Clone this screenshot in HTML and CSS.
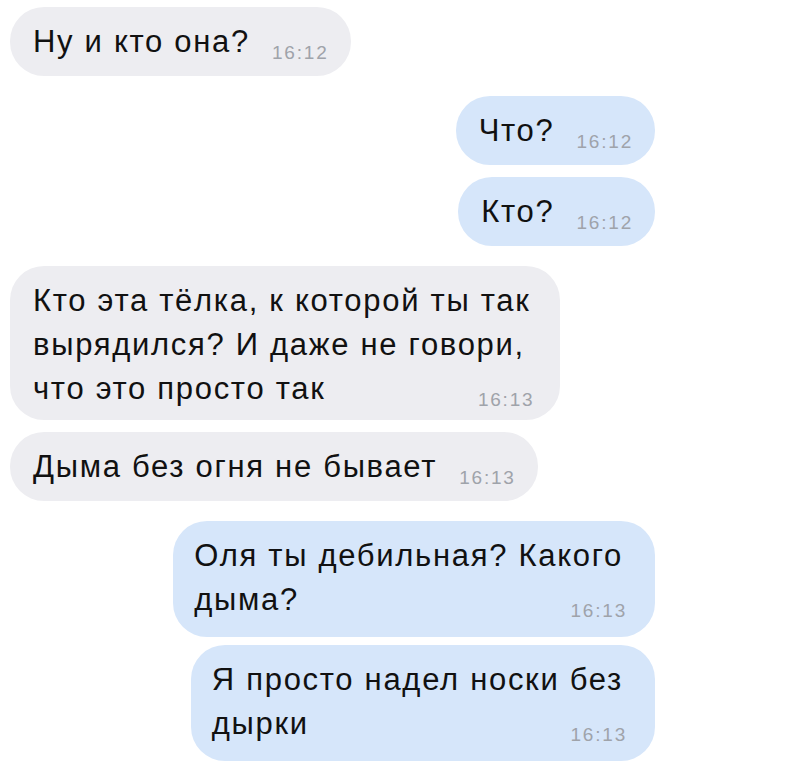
FILE: index.html
```html
<!DOCTYPE html>
<html lang="ru">
<head>
    <meta charset="UTF-8">
    <meta name="viewport" content="width=device-width, initial-scale=1.0">
    <title>Переписка</title>
    <link rel="stylesheet" href="styles.css">
</head>
<body>
    <div class="chat">
        <!-- Она -->
        <div class="msg in">
            <div class="bubble">
                <span class="text">Ну и кто она?</span>
                <span class="time">16:12</span>
            </div>
        </div>

        <!-- Я -->
        <div class="msg out next-side">
            <div class="bubble">
                <span class="text">Что?</span>
                <span class="time">16:12</span>
            </div>
        </div>
        <div class="msg out">
            <div class="bubble">
                <span class="text">Кто?</span>
                <span class="time">16:12</span>
            </div>
        </div>

        <!-- Она -->
        <div class="msg in next-side">
            <div class="bubble multi">
                <span class="text">Кто эта тёлка, к которой ты так<br>вырядился? И даже не говори,<br>что это просто так</span>
                <span class="time">16:13</span>
            </div>
        </div>
        <div class="msg in">
            <div class="bubble">
                <span class="text">Дыма без огня не бывает</span>
                <span class="time">16:13</span>
            </div>
        </div>

        <!-- Я -->
        <div class="msg out next-side">
            <div class="bubble multi">
                <span class="text">Оля ты дебильная? Какого<br>дыма?</span>
                <span class="time">16:13</span>
            </div>
        </div>
        <div class="msg out tight">
            <div class="bubble multi">
                <span class="text">Я просто надел носки без<br>дырки</span>
                <span class="time">16:13</span>
            </div>
        </div>
    </div>
</body>
</html>
```

FILE: styles.css
```css
body {
    margin: 0;
    background-color: #fff;
    font-family: "Liberation Sans", Arial, sans-serif;
    color: #111;
}

.chat {
    display: flex;
    flex-direction: column;
    gap: 12px;
    padding: 7px 136px 0 10px;
}

.msg {
    display: flex;
}

.msg.out {
    justify-content: flex-end;
}

.msg.next-side {
    margin-top: 8px;
}

.msg.tight {
    margin-top: -4px;
}

.bubble {
    display: flex;
    align-items: baseline;
    gap: 22px;
    padding: 13px 22px 12px 23px;
    border-radius: 34px;
    background-color: #ededf1;
}

.out .bubble {
    background-color: #d6e6fa;
}

.text {
    font-size: 31px;
    line-height: 44px;
    letter-spacing: 1.7px;
    white-space: nowrap;
}

.time {
    position: relative;
    top: 7px;
    font-size: 19px;
    letter-spacing: 1.8px;
    color: #9fa3aa;
}

.bubble.multi {
    display: grid;
    padding-right: 30px;
    padding-bottom: 9px;
}

.out .bubble.multi {
    padding-left: 21px;
    padding-right: 32px;
    padding-bottom: 15px;
}

.multi .text,
.multi .time {
    grid-area: 1 / 1;
}

.multi .time {
    justify-self: end;
    align-self: end;
    margin-right: -4px;
    line-height: 32px;
    top: 5px;
}
```
